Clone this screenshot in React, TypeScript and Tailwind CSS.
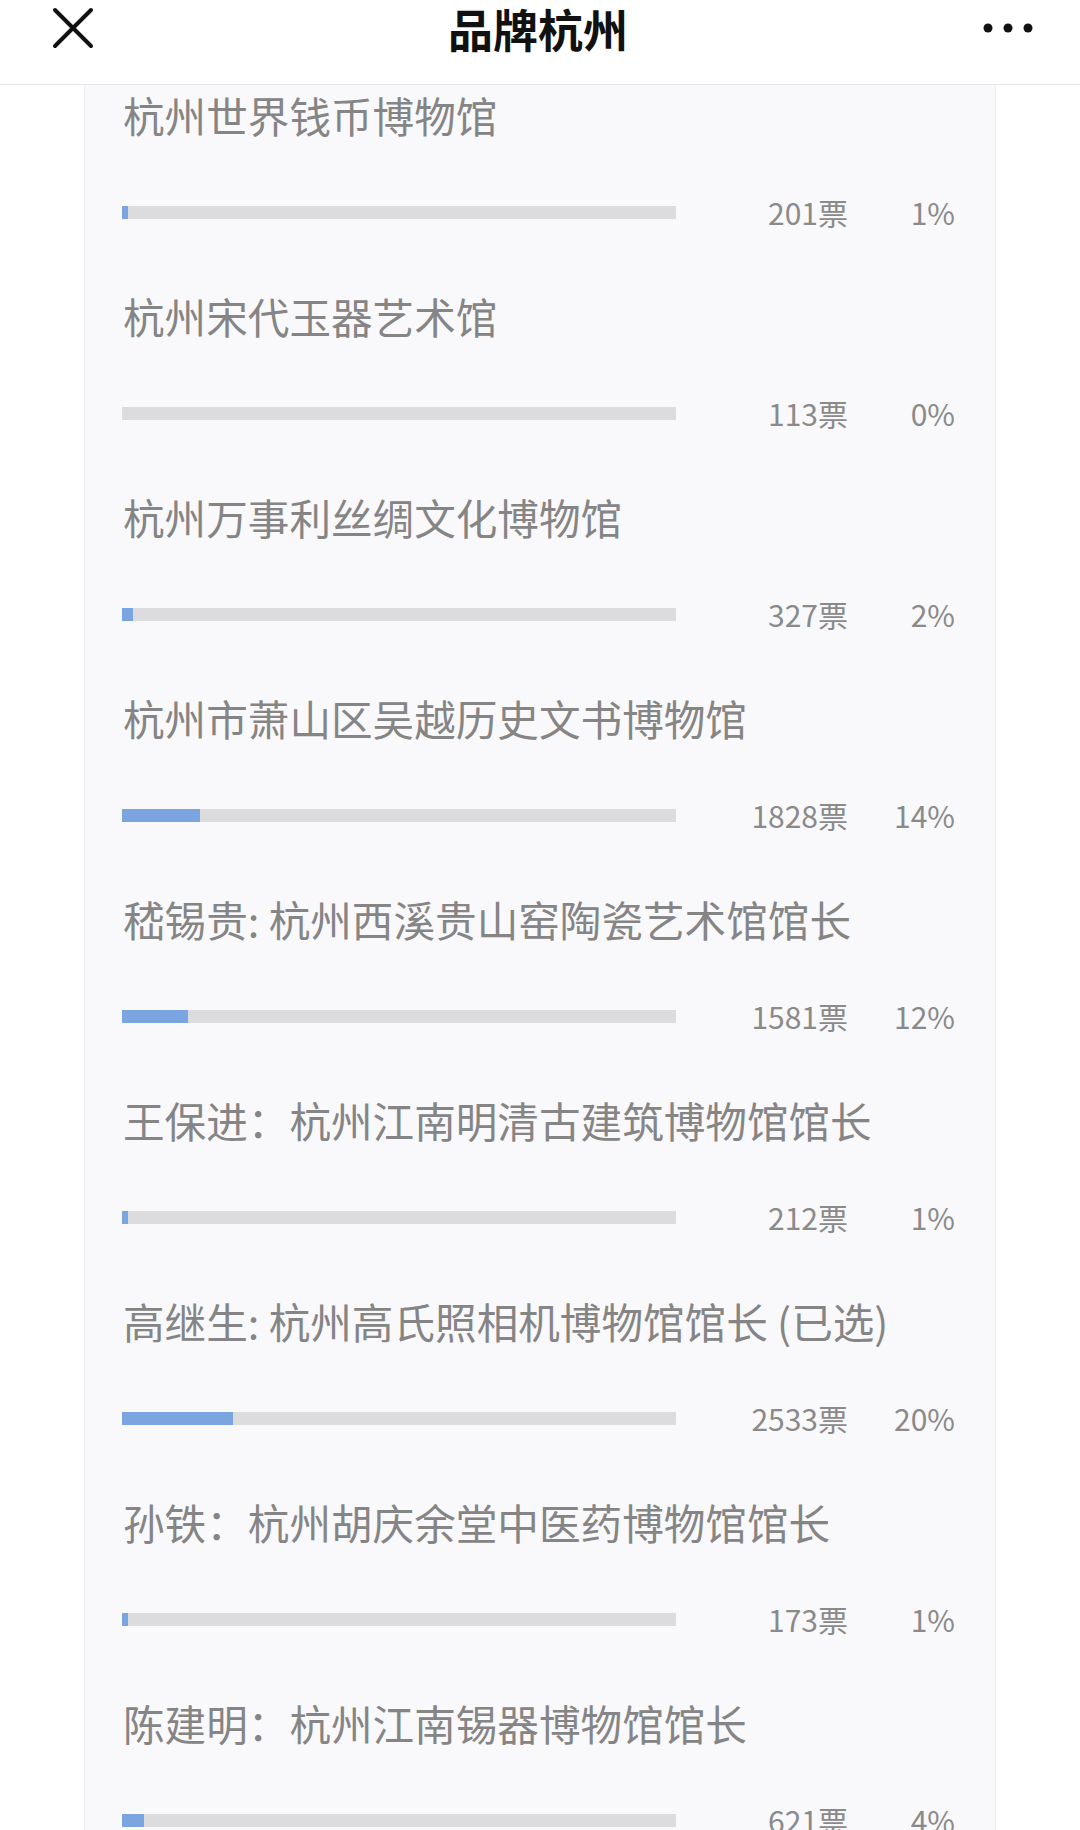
import React from 'react';

type Candidate = {
  name: string;
  votes: number;
  pct: number;
};

const BAR_WIDTH = 554;

const candidates: Candidate[] = [
  { name: '杭州世界钱币博物馆', votes: 201, pct: 1 },
  { name: '杭州宋代玉器艺术馆', votes: 113, pct: 0 },
  { name: '杭州万事利丝绸文化博物馆', votes: 327, pct: 2 },
  { name: '杭州市萧山区吴越历史文书博物馆', votes: 1828, pct: 14 },
  { name: '嵇锡贵: 杭州西溪贵山窑陶瓷艺术馆馆长', votes: 1581, pct: 12 },
  { name: '王保进：杭州江南明清古建筑博物馆馆长', votes: 212, pct: 1 },
  { name: '高继生: 杭州高氏照相机博物馆馆长 (已选)', votes: 2533, pct: 20 },
  { name: '孙铁：杭州胡庆余堂中医药博物馆馆长', votes: 173, pct: 1 },
  { name: '陈建明：杭州江南锡器博物馆馆长', votes: 621, pct: 4 },
];

function CloseIcon() {
  return (
    <svg width="42" height="42" viewBox="0 0 42 42" className="text-[#111]">
      <path d="M3 3 L39 39 M39 3 L3 39" stroke="currentColor" strokeWidth="4" strokeLinecap="round" />
    </svg>
  );
}

function MoreIcon() {
  return (
    <svg width="52" height="12" viewBox="0 0 52 12" className="text-[#111]">
      <circle cx="6" cy="6" r="4.5" fill="currentColor" />
      <circle cx="26" cy="6" r="4.5" fill="currentColor" />
      <circle cx="46" cy="6" r="4.5" fill="currentColor" />
    </svg>
  );
}

function ResultRow({ c }: { c: Candidate }) {
  return (
    <div className="h-[201px]">
      <div className="h-[60px] pl-[1px] text-[41.6px] leading-[60px] text-[#858585] whitespace-nowrap">{c.name}</div>
      <div className="mt-[47px] h-[40px] flex items-center">
        <div className="w-[554px] shrink-0 h-[13px] bg-[#dcdbdd] flex">
          <div className="h-full bg-[#7ba5e0]" style={{ width: Math.round((c.pct / 100) * BAR_WIDTH) }} />
        </div>
        <div className="w-[172px] shrink-0 text-right text-[30px] text-[#8a8a8a]">{c.votes}票</div>
        <div className="w-[107px] shrink-0 text-right text-[30px] text-[#8a8a8a]">{c.pct}%</div>
      </div>
    </div>
  );
}

export default function App() {
  return (
    <div
      className="w-[1080px] h-[1830px] overflow-hidden bg-white"
      style={{ fontFamily: '"Noto Sans CJK SC", "Noto Sans", sans-serif' }}
    >
      <header className="h-[85px] border-b border-[#e6e6e6] flex items-start justify-between pl-[52px] pr-[46px]">
        <div className="mt-[7px]">
          <CloseIcon />
        </div>
        <h1 className="mt-0 text-[45px] leading-[58px] font-bold text-[#111]">品牌杭州</h1>
        <div className="mt-[22px]">
          <MoreIcon />
        </div>
      </header>

      <main className="ml-[84px] w-[912px] h-[1745px] border-x border-[#ececef] bg-[#f9f8fb] pl-[37px] pr-[40px]">
        {candidates.map((c) => (
          <ResultRow key={c.name} c={c} />
        ))}
      </main>
    </div>
  );
}
